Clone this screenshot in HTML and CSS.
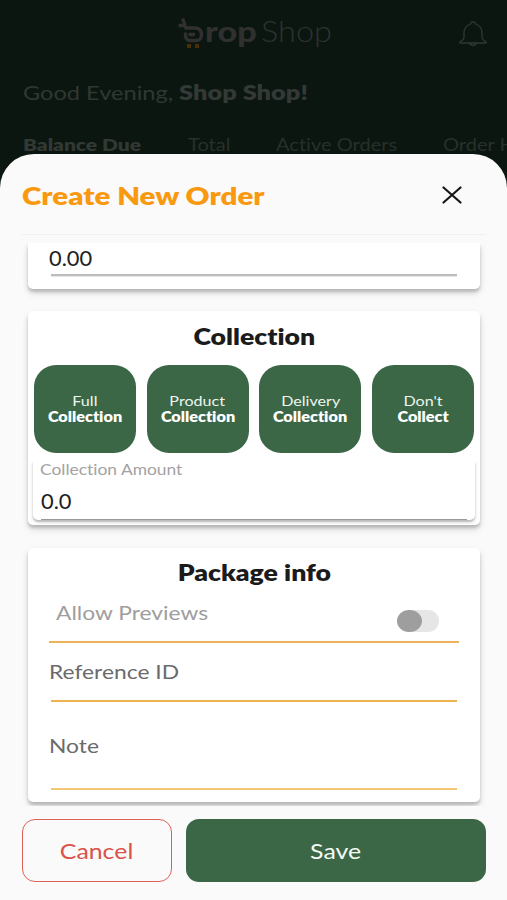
FILE: index.html
```html
<!DOCTYPE html>
<html lang="en">
<head>
<meta charset="utf-8">
<title>DropShop</title>
<link rel="stylesheet" href="styles.css">
</head>
<body>
<div class="app">
  <header class="topbar">
    <div class="logo">
      <svg class="logo-mark" width="28" height="34" viewBox="0 0 28 34" fill="none">
        <path d="M1.500 8.500H7.500L9 11H17.500Q24.500 11 24.500 17.500T17.500 23.500H13Q8.500 23.500 8.500 18V15.500M5.500 1.500L8 8M11.500 17.500H18" stroke="#30302f" stroke-width="3.400"/>
        <path d="M10 27H14V31H10ZM18 27H22V31H18Z" fill="#4d2d05"/>
      </svg>
      <span class="logo-drop">rop</span><span class="logo-shop">Shop</span>
    </div>
    <svg class="bell" width="30" height="26" viewBox="0 0 30 26" fill="none" stroke="#303832" stroke-width="1.300">
      <path d="M12.500 3Q12.500 1 15 1T17.500 3Q24 5 24 12V16Q24 19 28 20.500Q29 22 27 22H3Q1 22 2 20.500Q6 19 6 16V12Q6 5 12.500 3ZM11.500 22.500Q15 26.500 18.500 22.500"/>
    </svg>
  </header>
  <p class="greeting"><span class="hello">Good Evening,</span><b class="shop-name">Shop Shop!</b></p>
  <nav class="tabs">
    <span class="tab tab-balance">Balance Due</span>
    <span class="tab tab-total">Total</span>
    <span class="tab tab-active">Active Orders</span>
    <span class="tab tab-history">Order History</span>
  </nav>
  <main class="sheet">
    <div class="sheet-head">
      <h1 class="title">Create New Order</h1>
      <svg class="close" width="20" height="18" viewBox="0 0 20 18" stroke="#171717" stroke-width="2.200" stroke-linecap="round"><path d="M1.500 1.500L18.500 16.500M18.500 1.500L1.500 16.500"/></svg>
    </div>
    <div class="scroll">
      <section class="card card-price">
        <span class="value price">0.00</span>
        <i class="line line-grey"></i>
      </section>
      <section class="card card-collection">
        <h2 class="heading"><span class="collection-title">Collection</span></h2>
        <div class="choices">
          <button class="choice"><span>Full</span><b>Collection</b></button>
          <button class="choice"><span>Product</span><b>Collection</b></button>
          <button class="choice"><span>Delivery</span><b>Collection</b></button>
          <button class="choice"><span>Don't</span><b>Collect</b></button>
        </div>
        <div class="amount">
          <label class="amount-label">Collection Amount</label>
          <span class="value amount-value">0.0</span>
          <i class="amount-line"></i>
        </div>
      </section>
      <section class="card card-package">
        <h2 class="heading"><span class="package-title">Package info</span></h2>
        <div class="preview-row">
          <span class="preview-label">Allow Previews</span>
          <span class="switch"><i class="knob"></i></span>
        </div>
        <div class="field field-ref"><span class="field-label ref-label">Reference ID</span><i class="line"></i></div>
        <div class="field field-note"><span class="field-label note-label">Note</span><i class="line line-soft"></i></div>
      </section>
    </div>
    <footer class="actions">
      <button class="btn cancel"><span>Cancel</span></button>
      <button class="btn save"><span>Save</span></button>
    </footer>
  </main>
</div>
</body>
</html>
```
FILE: styles.css
```css
* { box-sizing: border-box; margin: 0; padding: 0; }
body { width: 507px; height: 900px; overflow: hidden; background: #0b1610; font-family: Lato, "Liberation Sans", sans-serif; font-variant-ligatures: none; }
button { font: inherit; border: 0; }
.app { height: 900px; overflow: hidden; display: flex; flex-direction: column; }
.topbar { height: 70px; flex: none; display: flex; padding: 17px 19px 0 177px; justify-content: space-between; align-items: flex-start; }
.logo { display: flex; line-height: 28px; white-space: nowrap; }
.logo-mark { flex: none; }
.logo-drop { width: 56px; font-size: 28px; font-weight: 900; color: #30302f; transform: scaleX(1.22); transform-origin: left; }
.logo-shop { font-size: 29px; font-weight: 300; color: #2d3230; transform: scaleX(1.12); transform-origin: left; }
.bell { margin-top: 4px; }
.greeting { height: 46px; flex: none; padding-left: 23px; display: flex; font-size: 20px; line-height: 44px; color: #303832; white-space: nowrap; }
.hello { width: 156px; transform: scaleX(1.18); transform-origin: left; }
.shop-name { transform: scaleX(1.27); transform-origin: left; color: #333936; font-weight: 800; }
.tabs { height: 38px; flex: none; padding: 17px 0 0 23px; display: flex; font-size: 17px; line-height: 23px; color: #27302a; white-space: nowrap; }
.tab { flex: none; transform: scaleX(1.18); transform-origin: left; }
.tab-balance { width: 165px; font-weight: 800; color: #323834; transform: scaleX(1.23); }
.tab-total { width: 88px; }
.tab-active { width: 167px; }
.sheet { flex: none; height: 746px; background: #fafafa; border-radius: 34px 34px 0 0; padding: 0 21px 18px 22px; display: flex; flex-direction: column; }
.sheet-head { height: 81px; flex: none; border-bottom: 1px solid #f1f1f1; display: flex; justify-content: space-between; align-items: center; padding: 2px 24px 0 0; }
.title { font-size: 25px; line-height: 32px; font-weight: 800; color: #f8990f; transform: scaleX(1.18); transform-origin: left; white-space: nowrap; }
.close { margin-bottom: 1px; }
.scroll { height: 563px; margin: 8px 0 0; padding: 0 6px; overflow: hidden; flex: none; display: flex; flex-direction: column; }
.card { flex: none; background: #fff; border-radius: 5px; box-shadow: 0 3px 3px rgba(0,0,0,.16), 0 4px 7px rgba(0,0,0,.15); display: flex; flex-direction: column; width: 452px; }
.card-price { height: 46px; border-radius: 0 0 5px 5px; padding: 0 21px; margin-bottom: 22px; }
.value { font-size: 21px; line-height: 29px; color: #212121; align-self: flex-start; transform: scaleX(1.04); transform-origin: left; }
.price { height: 31px; }
.line { display: block; height: 2px; background: #edb34f; margin: 0 2px; }
.line-grey { background: #bdbdbd; height: 3px; border-bottom: 1px solid #e6e6e6; }
.line-soft { background: #f2c675; }
.card-collection { height: 214px; padding: 0 5px 0 5px; margin-bottom: 23px; }
.heading { font-size: 22px; line-height: 30px; text-align: center; color: #1b1b1b; font-weight: 800; white-space: nowrap; }
.card-collection .heading { height: 54px; padding-top: 11px; }
.heading span { display: inline-block; transform: scaleX(1.21); }
.choices { display: grid; grid-template-columns: repeat(4, 102px); justify-content: space-between; height: 88px; padding: 0 1px; }
.choice { background: #3b6747; color: #edf5ee; border-radius: 22px; display: flex; flex-direction: column; align-items: center; justify-content: center; font-size: 14px; line-height: 16px; padding-bottom: 1px; }
.choice span { transform: scaleX(1.15); }
.choice b { color: #fff; font-weight: 800; transform: scaleX(1.16); }
.amount { width: 442px; height: 59px; margin-top: 8px; padding: 0 8px; border-radius: 0 0 5px 5px; box-shadow: 0 2px 2px rgba(0,0,0,.2), 0 2px 4px rgba(0,0,0,.12); display: flex; flex-direction: column; clip-path: inset(0 -5px -6px -5px); }
.amount-label { font-size: 15px; line-height: 16px; color: #a3a3a3; transform: scaleX(1.16); transform-origin: left; align-self: flex-start; margin-left: -1px; }
.amount-value { height: 42px; line-height: 47px; }
.amount-line { flex: none; height: 1px; background: #999; }
.card-package { height: 254px; padding: 0 21px; }
.card-package .heading { height: 40px; padding-top: 10px; }
.preview-row { height: 55px; border-bottom: 2px solid #edb35a; padding: 0 20px 0 7px; display: flex; justify-content: space-between; }
.preview-label { font-size: 20px; line-height: 48px; color: #9e9e9e; transform: scaleX(1.14); transform-origin: left; }
.switch { width: 42px; height: 22px; margin-top: 22px; background: #e6e6e6; border-radius: 11px; }
.knob { display: block; width: 25px; height: 22px; background: #9e9e9e; border-radius: 50%; }
.field { display: flex; flex-direction: column; justify-content: space-between; }
.field-label { align-self: flex-start; font-size: 20px; line-height: 28px; color: #6b6b6b; transform: scaleX(1.14); transform-origin: left; }
.field-ref { height: 59px; padding-top: 14px; }
.field-note { height: 88px; padding-top: 29px; }
.actions { margin-top: 13px; height: 63px; flex: none; display: flex; gap: 14px; }
.btn { border-radius: 13px; font-size: 22px; display: flex; align-items: center; justify-content: center; }
.btn span { transform: scaleX(1.13); }
.cancel { width: 150px; border: 1.500px solid #dd6158; color: #d9534a; background: #fafafa; }
.save { flex: 1; background: #3b6747; color: #f5faf5; }
```
